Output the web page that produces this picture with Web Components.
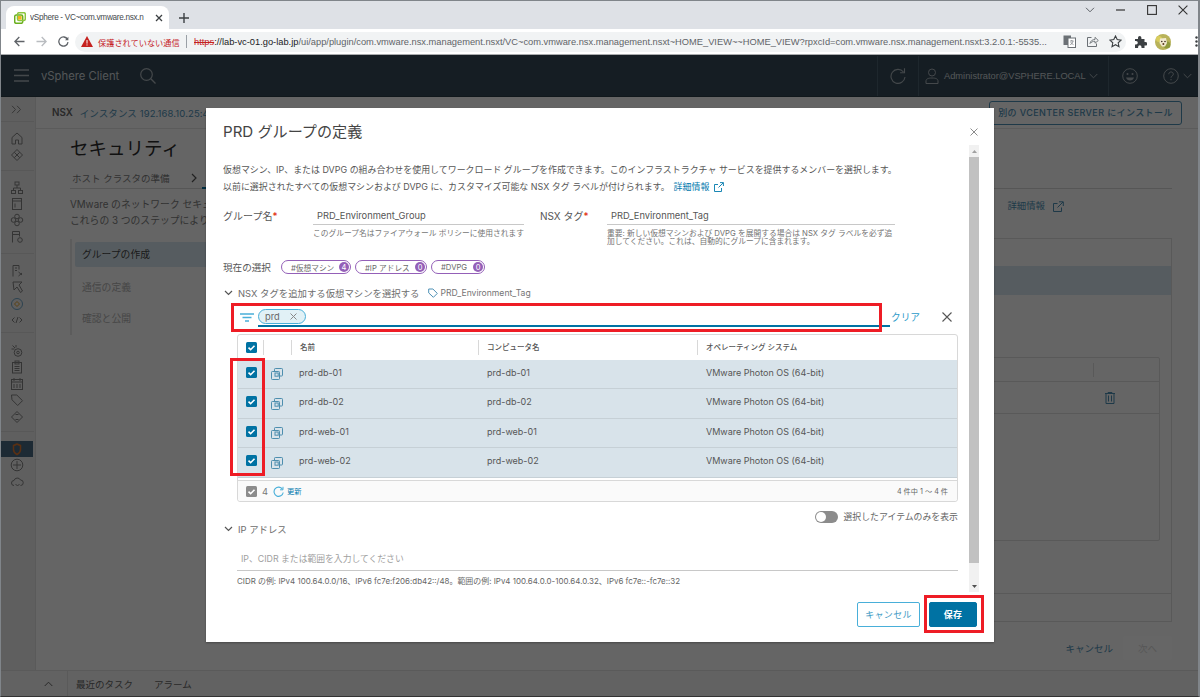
<!DOCTYPE html>
<html lang="ja">
<head>
<meta charset="utf-8">
<title>vSphere</title>
<style>
html,body{margin:0;padding:0;width:1200px;height:697px;overflow:hidden;background:#fff}
body{font-family:Inter,"Noto Sans CJK JP",sans-serif;position:relative}
</style>
</head>
<body>
<app-shell>
  <browser-chrome></browser-chrome>
  <vsphere-app></vsphere-app>
</app-shell>
<modal-backdrop>
  <group-modal></group-modal>
</modal-backdrop>
<red-box style="--x:231px;--y:303px;--w:651px;--h:29px"></red-box>
<red-box style="--x:230px;--y:358px;--w:35px;--h:118px"></red-box>
<red-box style="--x:924px;--y:595px;--w:60px;--h:38px"></red-box>
<window-frame></window-frame>
<script>
const def=(name,css,html)=>customElements.define(name,class extends HTMLElement{
  connectedCallback(){
    if(this.shadowRoot)return;
    this.attachShadow({mode:'open'}).innerHTML='<style>'+css+'</style>'+(typeof html==='function'?html(this):html);
  }
});
const svg=(w,h,vb,body,extra='')=>`<svg width="${w}" height="${h}" viewBox="${vb}" fill="none" ${extra}>${body}</svg>`;

def('app-shell',':host{display:flex;flex-direction:column;width:1200px;height:697px}','<slot></slot>');
def('window-frame',':host{position:absolute;inset:0;border:1px solid #80858a;border-right-width:2px;border-bottom-color:#333;pointer-events:none}','');
def('red-box',':host{position:absolute;left:var(--x);top:var(--y);width:var(--w);height:var(--h);border:3px solid #ee1c25;box-sizing:border-box;pointer-events:none}','');

/* ---------- browser chrome ---------- */
def('browser-chrome',`
:host{display:block;flex:none;height:55px;background:#fff;font-family:"Liberation Sans","Noto Sans CJK JP",sans-serif}
.strip{height:29px;background:#dee1e6;display:flex;align-items:flex-end;box-sizing:border-box;padding-left:6px;color:#3c4043}
.tab{width:163px;height:23px;background:#fff;border-radius:8px 8px 0 0;display:flex;align-items:center;box-sizing:border-box;padding:0 6px 0 8px;font-size:8.200px}
.tab svg{flex:none}
.tab .t{width:118px;margin-left:4px;overflow:hidden;white-space:nowrap;color:#45494d;letter-spacing:-.3px}
.tab .x{margin-left:7px;flex:none}
.plus{margin:0 0 6px 10px;flex:none}
.win{margin-left:auto;display:flex;align-items:center;align-self:flex-start;margin-top:5px;padding-right:12px}
.win svg{display:block}
.tb{height:26px;box-sizing:border-box;display:flex;align-items:center;border-bottom:1px solid #a9abad;padding-left:8px}
.nav{display:flex;width:67px;align-items:center}
.nav span{width:22px;display:flex;justify-content:center}
.omni{width:1051px;height:20px;background:#f1f3f4;border-radius:10px;display:flex;align-items:center;font-size:9.300px;white-space:nowrap;box-sizing:border-box;padding-left:6px;flex:none}
.warn{color:#c5221f;margin-left:5px;font-size:8.200px;width:82px;flex:none}
.sep{width:1px;height:13px;background:#9aa0a6;margin:0 7px 0 6px;flex:none}
.url{color:#5f6368;width:860px;overflow:hidden;flex:none}
.url s{color:#c5221f}
.url b{font-weight:400;color:#202124}
.oi{display:flex;gap:10px;margin-left:9px;align-items:center}
.ext{display:flex;align-items:center;margin-left:8px;gap:8px}
`,()=>`
<div class="strip">
  <div class="tab">
    ${svg(12,12,'0 0 12 12','<rect x="0.7" y="3" width="8" height="8.3" rx="1.5" stroke="#6aaf1f" stroke-width="1.5"/><rect x="3.5" y="0.7" width="7.8" height="7.8" rx="1.5" stroke="#8cc63f" stroke-width="1.5"/><rect x="4" y="4" width="3.6" height="3.6" fill="#f2b21c"/>')}
    <span class="t">vSphere - VC~com.vmware.nsx.n</span>
    ${svg(8,8,'0 0 8 8','<path d="M1 1l6 6M7 1L1 7" stroke="#3c4043" stroke-width="1.3"/>','class="x"')}
  </div>
  ${svg(10,10,'0 0 10 10','<path d="M5 0v10M0 5h10" stroke="#3c4043" stroke-width="1.4"/>','class="plus"')}
  <div class="win">
    ${svg(10,6,'0 0 10 6','<path d="M1 .8l4 4 4-4" stroke="#5f6368"/>')}
    <span style="width:21px"></span>
    ${svg(9,2,'0 0 9 2','<path d="M0 1h9" stroke="#333" stroke-width="1.2"/>')}
    <span style="width:22px"></span>
    ${svg(10,10,'0 0 10 10','<rect x=".6" y=".6" width="8.8" height="8.8" stroke="#333" stroke-width="1.1"/>')}
    <span style="width:21px"></span>
    ${svg(10,10,'0 0 10 10','<path d="M.6.6l8.8 8.8M9.4.6L.6 9.4" stroke="#333" stroke-width="1.1"/>')}
  </div>
</div>
<div class="tb">
  <div class="nav">
    <span>${svg(11,11,'0 0 11 11','<path d="M10.5 5.5H1M5.3 1L.9 5.5l4.4 4.5" stroke="#5f6368" stroke-width="1.3"/>')}</span>
    <span>${svg(11,11,'0 0 11 11','<path d="M.5 5.5H10M5.7 1l4.4 4.5L5.7 10" stroke="#b9bcc0" stroke-width="1.3"/>')}</span>
    <span>${svg(11,11,'0 0 11 11','<path d="M9.500 3.400A4.600 4.600 0 1 0 10 6.200" stroke="#5f6368" stroke-width="1.3"/><path d="M10.400.8v3.400H7z" fill="#5f6368"/>')}</span>
  </div>
  <div class="omni">
    ${svg(12,11,'0 0 12 11','<path d="M6 0l6 11H0z" fill="#c5221f"/><path d="M6 4v3.600M6 8.400v1.100" stroke="#fff"/>')}
    <span class="warn">保護されていない通信</span><span class="sep"></span>
    <span class="url"><s>https</s><b>://lab-vc-01.go-lab.jp</b>/ui/app/plugin/com.vmware.nsx.management.nsxt/VC~com.vmware.nsx.management.nsxt~HOME_VIEW~~HOME_VIEW?rpxcId=com.vmware.nsx.management.nsxt:3.2.0.1:-5535...</span>
    <span class="oi">
      ${svg(13,13,'0 0 13 13','<rect x=".5" y=".5" width="7.5" height="9.5" fill="#6b7075"/><rect x="5" y="3" width="7.5" height="9.5" fill="#fff" stroke="#6b7075"/><path d="M7 6h3.600M8.800 5v1M10 6.200c-.4 2-1.400 2.800-2.800 3.400M7.800 7c.4 1 1.300 2 2.700 2.600" stroke="#6b7075" stroke-width=".7"/>')}
      ${svg(13,13,'0 0 13 13','<path d="M5.500 2.500H1.500v9h9V8.500" stroke="#6b7075"/><path d="M4 8.500c.4-2.600 2.500-4 5-4V2.300l3.300 3.200L9 8.200V6.300c-2 0-3.800.6-5 2.200z" stroke="#6b7075" stroke-width=".9"/>')}
      ${svg(13,13,'0 0 13 13','<path d="M6.500 1l1.700 3.600 3.900.5-2.900 2.700.8 3.900-3.500-2-3.500 2 .8-3.900L.9 5.100l3.900-.5z" stroke="#3c4043" stroke-width="1.100"/>')}
    </span>
  </div>
  <div class="ext">
    ${svg(13,13,'0 0 13 13','<path d="M1 4h3V2.700a1.700 1.700 0 0 1 3.400 0V4h3.100v3h1a1.800 1.800 0 0 1 0 3.600h-1V13H7.500v-1a1.700 1.700 0 0 0-3.400 0v1H1V9.500h1a1.800 1.800 0 0 0 0-3.600H1z" fill="#3c4043"/>')}
    ${svg(16,16,'0 0 16 16','<circle cx="8" cy="8" r="8" fill="#b9b35a"/><circle cx="4" cy="5" r="3" fill="#d9cd5d"/><circle cx="12" cy="11" r="3.500" fill="#8f9a3c"/><path d="M5 4.500l6-.5 1 5-2 3.500H7L4.500 9z" fill="#f2ead0"/><circle cx="6.800" cy="7.500" r=".8" fill="#3b2a1a"/><circle cx="10" cy="7.500" r=".8" fill="#3b2a1a"/><circle cx="8.400" cy="10" r="1" fill="#5b3a20"/>')}
    <span style="width:8px"></span>
    ${svg(3,11,'0 0 3 11','<circle cx="1.500" cy="1.500" r="1.200" fill="#3c4043"/><circle cx="1.500" cy="5.500" r="1.200" fill="#3c4043"/><circle cx="1.500" cy="9.500" r="1.200" fill="#3c4043"/>')}
  </div>
</div>`);

/* ---------- vSphere app (dimmed by the backdrop) ---------- */
def('vsphere-app',':host{display:flex;flex-direction:column;flex:1;min-height:0;background:#fcfcfc}','<vs-header></vs-header><vs-work></vs-work><vs-tasks></vs-tasks>');

def('vs-header',`
:host{display:flex;align-items:center;height:42px;flex:none;background:#364a58;color:#cfd6db;box-sizing:border-box;font-size:11.5px;border-bottom:1px solid #2c3c48}
.brand{font-size:11.300px;margin-left:12px;width:99px;white-space:nowrap}
.burger{margin-left:14px}
.sp{flex:1}
.d{width:1px;height:40px;background:#4d6372;flex:none}
.ref{width:40px;display:flex;justify-content:center}
.user{display:flex;align-items:center;width:189px;box-sizing:border-box;padding-left:6px;white-space:nowrap;font-size:9.300px;font-family:"Liberation Sans",sans-serif}
.user span{margin:0 5px 0 5px;width:140px}
.r{display:flex;align-items:center;width:91px;box-sizing:border-box;padding-left:13px}
`,()=>`
${svg(15,13,'0 0 15 13','<path d="M0 1h15M0 6.500h15M0 12h15" stroke="#aab4bb" stroke-width="1.300"/>','class="burger"')}
<span class="brand">vSphere Client</span>
${svg(16,16,'0 0 16 16','<circle cx="6.500" cy="6.500" r="5.800" stroke="#aab4bb" stroke-width="1.200"/><path d="M10.800 10.800l4.700 4.700" stroke="#aab4bb" stroke-width="1.300"/>')}
<span class="sp"></span>
<span class="d"></span>
<span class="ref">${svg(16,17,'0 0 16 17','<path d="M13.500 5a7 7 0 1 0 1.500 5" stroke="#aab4bb" stroke-width="1.100"/><path d="M14.500 1.300v4.400h-4.400" stroke="#aab4bb" stroke-width="1.100"/>')}</span>
<span class="d"></span>
<span class="user">
  ${svg(14,16,'0 0 14 16','<circle cx="7" cy="4.500" r="3.500" stroke="#aab4bb"/><path d="M1 15.500v-2.500c0-2 2-3 6-3s6 1 6 3v2.500z" stroke="#aab4bb"/>')}
  <span>Administrator@VSPHERE.LOCAL</span>
  ${svg(9,6,'0 0 9 6','<path d="M.7 1l3.800 3.800L8.300 1" stroke="#aab4bb"/>')}
</span>
<span class="d"></span>
<span class="r">
  ${svg(16,16,'0 0 16 16','<circle cx="8" cy="8" r="7.300" stroke="#aab4bb"/><circle cx="5.500" cy="6" r="1" fill="#aab4bb"/><circle cx="10.500" cy="6" r="1" fill="#aab4bb"/><path d="M4 9.500h8c-.5 2-2 3-4 3s-3.500-1-4-3z" fill="#aab4bb"/>')}
  <span style="width:25px"></span>
  ${svg(16,16,'0 0 16 16','<circle cx="8" cy="8" r="7.300" stroke="#aab4bb"/><path d="M5.800 6.200c0-3 4.500-3 4.500 0 0 1.800-2.300 1.600-2.300 3.500M8 11v1.300" stroke="#aab4bb"/>')}
  <span style="width:4px"></span>
  ${svg(9,6,'0 0 9 6','<path d="M.7 1l3.800 3.800L8.300 1" stroke="#aab4bb"/>')}
</span>`);

def('vs-work',':host{display:flex;flex:1;min-height:0}','<vs-sidenav></vs-sidenav><vs-main></vs-main>');

const I={
 home:'<path d="M2 13V6.500L7 2l5 4.500V13H8.500V9h-3v4z"/>',
 diamond:'<path d="M7 1.500L12.500 7 7 12.500 1.500 7z"/><path d="M4.300 4.300l5.400 5.400M9.700 4.300l-5.400 5.400"/>',
 net:'<rect x="5" y="1" width="4" height="3"/><rect x="1.500" y="9.500" width="4" height="3"/><rect x="8.500" y="9.500" width="4" height="3"/><path d="M7 4v3M3.500 9.500V7h7v2.500"/>',
 store:'<rect x="2.500" y="1.500" width="9" height="11"/><path d="M2.500 4h9M5 6.500v4"/>',
 flower:'<circle cx="7" cy="3.500" r="2.300"/><circle cx="7" cy="10.500" r="2.300"/><circle cx="3.500" cy="7" r="2.300"/><circle cx="10.500" cy="7" r="2.300"/>',
 doc:'<path d="M2.500 12.500v-11h7v5"/><path d="M2.500 4.500h7"/><circle cx="10" cy="10" r="2.300"/>',
 doc2:'<path d="M3 12.500v-11h6v4"/><path d="M5 4h2M5 6.500h2"/><path d="M8.500 8l3.500 3M8.500 12l3.500-3"/>',
 arrow:'<path d="M3 2h9l-3 3 3.500 6-2 1.500L7 7l-3 3z"/>',
 cloud:'<circle cx="7" cy="7" r="5.500" stroke="#6fa6c7"/><path d="M7 4.500L9.500 7 7 9.500 4.500 7z" stroke="#e5a12c"/>',
 code:'<path d="M4.500 4.500L2 7l2.500 2.500M9.500 4.500L12 7 9.500 9.500M8 4L6 10"/>',
 gears:'<circle cx="8" cy="8.500" r="3.800"/><circle cx="8" cy="8.500" r="1.300"/><path d="M2.500 1.500L5 4M1.500 5h3M6 1v2.500"/>',
 clip:'<rect x="2.500" y="2.500" width="9" height="10.500"/><rect x="5" y="1" width="4" height="3"/><path d="M4.500 6.500h5M4.500 8.500h5M4.500 10.500h5"/>',
 cal:'<rect x="1.500" y="2.500" width="11" height="10"/><path d="M1.500 5h11M4 1v3M10 1v3M4 7v4M7 7v4M10 7v4"/>',
 tag:'<path d="M1.500 2h5.300l5.700 5.700-4.800 4.800L2 6.800z"/>',
 sync:'<path d="M7 1.500L12.500 7 7 12.500 1.500 7z"/><path d="M5.500 4.500h3M5.500 9.500h3"/>',
 shield:'<path d="M3.500 3.500C5 3 6 2.500 7 2c1 .5 2 1 3.500 1.500v4C10.500 10 9 11.500 7 12.500 5 11.500 3.500 10 3.500 7.500z" stroke="#e0762e" stroke-width="1.500"/>',
 plus:'<circle cx="7" cy="7" r="5.800"/><path d="M7 3v8M3 7h8"/>',
 cloud2:'<path d="M4 10.500a2.500 2.500 0 0 1 0-5 3.500 3.500 0 0 1 6.500-.5 2.500 2.500 0 0 1 0 5.500"/><path d="M5.500 9l2 2 2-2"/>'
};
const ic=(n)=>`<span class="i">${svg(14,14,'0 0 14 14',I[n],'stroke="#828282" stroke-width="1"')}</span>`;
def('vs-sidenav',`
:host{display:flex;flex-direction:column;width:35px;flex:none;background:#eeeeee;border-right:1px solid #e0e0e0;box-sizing:content-box;color:#888}
.top{height:25px;display:flex;align-items:center;justify-content:center;font-size:13px;color:#777;border-bottom:1px solid #dcdcdc;padding-right:1px;box-sizing:border-box;width:34px}
.g{border-bottom:1px solid #dcdcdc;display:flex;flex-direction:column;width:34px;box-sizing:border-box}
.g.last{border:0}
.i{height:16.400px;display:flex;align-items:center;justify-content:center}
.i svg{display:block}
.a{background:#4a6a82;height:16px;width:33px}
`,()=>`
<div class="top">${svg(11,9,'0 0 11 9','<path d="M1 .8L4.500 4.500 1 8.200M6 .8l3.500 3.700L6 8.200" stroke="#8a8a8a"/>')}</div>
<div class="g" style="padding:8px 0 7px">${ic('home')}${ic('diamond')}</div>
<div class="g" style="padding:8.700px 0 7.700px">${ic('net')}${ic('store')}${ic('flower')}${ic('doc')}</div>
<div class="g" style="padding:9px 0 4px">${ic('doc2')}${ic('arrow')}${ic('cloud')}${ic('code')}</div>
<div class="g" style="padding:9.500px 0 6.500px">${ic('gears')}${ic('clip')}${ic('cal')}${ic('tag')}${ic('sync')}</div>
<div class="g last" style="padding-top:9px"><span class="i a">${svg(14,14,'0 0 14 14',I.shield)}</span>${ic('plus')}${ic('cloud2')}</div>`);

def('vs-main',`
:host{display:flex;flex-direction:column;flex:1;min-width:0;color:#6a6a6a;font-size:10.200px}
.crumb{height:32px;flex:none;display:flex;align-items:center;border-bottom:1px solid #e4e4e4;padding:0 18px 0 16px;box-sizing:border-box;white-space:nowrap}
.crumb b{font-weight:600;margin-right:7px;color:#666;font-size:9.800px}
.crumb a{color:#4d90b5;font-size:9.500px;letter-spacing:.1px}
.inst{margin-left:auto;height:24px;width:193px;box-sizing:border-box;border:1px solid #4d90b5;border-radius:3px;color:#4d90b5;display:flex;align-items:center;justify-content:center;font-size:9px;font-weight:500;letter-spacing:.4px;white-space:nowrap}
.body{flex:1;min-height:0;display:flex;flex-direction:column;padding:8px 28px 0 34px}
h1{margin:0;font-weight:400;font-size:18.500px;line-height:22px;color:#2c2c2c;flex:none}
.tabs{margin-top:9px;height:21px;flex:none;border-bottom:1px solid #d6d6d6;display:flex;align-items:center;padding-left:2px;box-sizing:border-box;color:#7c7c7c;font-size:9.500px}
.tabs svg{margin-left:22px}
.tabs i{align-self:flex-end;width:60px;height:2px;margin:0 0 -1px 5px;background:#0072a3}
.desc{margin-top:8px;flex:none;line-height:16px;display:flex;justify-content:space-between;white-space:nowrap;color:#7c7c7c;font-size:9.800px}
.desc a{color:#4d90b5;display:inline-flex;align-items:center;gap:8px;font-size:9.400px;align-self:flex-start;margin:1px 108px 0 0;height:16px}
.desc a em{font-style:normal;color:#7c7c7c}
.panel{display:flex;margin-top:9px;height:384px;flex:none}
.step{width:160px;flex:none;height:96px;border-left:2px solid #e6e6e6;margin-top:1px;box-sizing:border-box;padding:3px 0 0 3px;font-size:9.800px}
.step div{height:31px;line-height:31px;padding-left:7px;color:#b0b0b0}
.step div.on{height:25px;line-height:25px;background:#d8e6ef;color:#444;margin-bottom:5px;border-radius:2px 0 0 2px}
.box{flex:1;border:1px solid #dfdfdf;display:flex;flex-direction:column;box-sizing:border-box}
.bh{height:27px;flex:none}
.band{height:29px;background:#d8e6ef;flex:none}
.inner{margin:62px 11px 0 20px;height:184px;border:1px solid #dfdfdf;border-radius:2px;box-sizing:border-box;flex:none}
.ih{height:24px;border-bottom:1px solid #dfdfdf;display:flex;justify-content:flex-end;padding-right:65px;align-items:center;box-sizing:border-box}
.ih i{width:1px;height:14px;background:#dfdfdf}
.ir{height:32px;border-bottom:1px solid #dfdfdf;display:flex;justify-content:flex-end;align-items:center;padding-right:44px;box-sizing:border-box}
.foot{margin-top:52px;border-top:1px solid #dfdfdf;flex:1}
.acts{display:flex;justify-content:flex-end;align-items:center;margin-top:14px;height:24px;flex:none;gap:10px}
.acts a{color:#4d90b5;font-size:9.500px}
.next{width:49px;height:24px;background:#fff;color:#d8d8d8;border-radius:3px;display:flex;align-items:center;justify-content:center;font-size:9.500px}
`,()=>`
<div class="crumb"><b>NSX</b><a>インスタンス 192.168.10.25:443</a><span class="inst">別の VCENTER SERVER にインストール</span></div>
<div class="body">
  <h1>セキュリティ</h1>
  <div class="tabs">ホスト クラスタの準備${svg(6,10,'0 0 6 10','<path d="M1 1l4 4-4 4" stroke="#555" stroke-width="1.200"/>')}<i></i></div>
  <div class="desc"><div>VMware のネットワーク セキュリティ<br>これらの 3 つのステップにより</div>
    <a><em>。</em><span>詳細情報</span>${svg(11,11,'0 0 11 11','<path d="M8.500 6.500v4h-8v-8h4M6 .8h4.300V5M10 1L4.500 6.500" stroke="#4d90b5"/>')}</a></div>
  <div class="panel">
    <div class="step"><div class="on">グループの作成</div><div>通信の定義</div><div>確認と公開</div></div>
    <div class="box">
      <div class="bh"></div><div class="band"></div>
      <div class="inner"><div class="ih"><i></i></div><div class="ir">${svg(10,12,'0 0 10 12','<path d="M0 1.500h10M3 1.500V.5h4v1M1 1.500v10h8v-10M3.500 3.500v6M6.500 3.500v6" stroke="#4d90b5"/>')}</div></div>
      <div class="foot"></div>
    </div>
  </div>
  <div class="acts"><a>キャンセル</a><span class="next">次へ</span></div>
</div>`);

def('vs-tasks',`
:host{display:flex;align-items:center;height:27px;flex:none;background:#f4f4f4;border-top:1px solid #e2e2e2;box-sizing:border-box;font-size:9.500px;color:#666}
svg{margin-left:44px}
.s{width:1px;height:26px;background:#e2e2e2;margin:0 8px 0 14px}
.b{margin-left:21px}
`,()=>`${svg(9,6,'0 0 9 6','<path d="M.7 5l3.800-3.800L8.300 5" stroke="#666"/>')}<span class="s"></span><span>最近のタスク</span><span class="b">アラーム</span>`);

/* ---------- modal ---------- */
def('modal-backdrop',':host{position:absolute;left:0;top:55px;right:0;bottom:0;background:rgba(0,0,0,.6)}','<slot></slot>');

def('group-modal',`
:host{position:absolute;left:206px;top:53px;width:788px;height:534px;background:#fff;display:flex;flex-direction:column;box-sizing:border-box;padding-left:17px;color:#565656;font-size:8.950px;box-shadow:0 1px 2px rgba(0,0,0,.3)}
.hd{height:37px;flex:none;display:flex;align-items:flex-start;justify-content:space-between;padding:14px 16px 0 0;box-sizing:border-box}
h2{margin:0;font-weight:400;font-size:15.100px;line-height:20px;color:#444;white-space:nowrap}
.close{margin-top:6px}
.mid{flex:1;display:flex;min-height:0;padding-right:15px}
.ct{flex:1;min-width:0;overflow:hidden;padding:16px 11px 0 0;box-sizing:border-box}
.ft{height:50px;flex:none;display:flex;justify-content:flex-end;gap:9px;padding:10px 17px 0 0;box-sizing:border-box}
.btn{height:25px;box-sizing:border-box;border:1px solid #49afd9;border-radius:2px;display:flex;align-items:center;justify-content:center;font-size:9px;width:63px;color:#3d9ac4;letter-spacing:.3px}
.btn.p{width:48px;background:#0072a3;border-color:#0072a3;color:#fff;font-weight:600}
.intro{line-height:17px;white-space:nowrap;color:#565656}
.intro a{color:#0079ad;display:inline-flex;gap:5px;align-items:center;margin-left:4px}
.form{display:grid;grid-template-columns:90px 211px 16px 67px 288px;margin-top:11px;height:38px}
.lbl{font-size:10px;line-height:20px;color:#565656;white-space:nowrap}
.lbl i{color:#e02200;font-style:normal}
.inp{height:19px;box-sizing:border-box;border-bottom:1px solid #c8c8c8;padding-left:4px;font-size:9.300px;line-height:19px;color:#565656;white-space:nowrap}
.help{margin-top:4px;font-size:7.750px;line-height:8px;color:#747474;white-space:nowrap}
.sel{display:flex;align-items:center;margin-top:16px;height:14px}
.sel span.l{width:58px;font-size:9.600px;flex:none}
.sel tag-chip{margin-right:4px}
.sec{display:flex;align-items:center;margin-top:11px;height:16px;white-space:nowrap;font-size:9.400px;color:#6d6d6d}
.sec .ch{margin:0 5px 0 1px}
.sec .tg{margin:0 2px 0 9px}
.sec .tn{font-size:8.600px;color:#747474}
.flt{display:flex;align-items:center;margin-top:6px;height:20px;padding-left:17px}
.flt .fi{height:20px;box-sizing:border-box;margin-left:4px;border-bottom:2px solid #0072a3;display:flex;align-items:flex-start;flex:none;width:632px}
.fc{display:inline-flex;align-items:center;height:15px;width:48px;box-sizing:border-box;border:1px solid #49afd9;background:#e1f1f6;border-radius:8px;margin-top:2px;padding:0 8px 0 6px;color:#666;font-size:9.300px;justify-content:space-between}
.clr{margin-left:1px;color:#2b9ac9;font-size:9.700px;width:28px;white-space:nowrap}
.fx{margin-left:23px}
vm-grid{margin:7px 0 0 14px}
.tog{display:flex;justify-content:flex-end;align-items:center;margin-top:9px;height:11px;white-space:nowrap;color:#666;font-size:8.900px}
.tog .t{width:23px;height:12px;background:#8c8c8c;border-radius:6px;margin-right:6px;position:relative;flex:none}
.tog .t::after{content:"";position:absolute;left:1px;top:1px;width:10px;height:10px;border-radius:50%;background:#fff}
.ip{display:flex;align-items:center;height:14px;font-size:9.400px;color:#6d6d6d}
.ip svg{margin:0 5px 0 1px}
.pl{margin:11px 0 0 14px;height:24px;box-sizing:border-box;border-bottom:1px solid #c8c8c8;line-height:23px;padding-left:4px;color:#a0a0a0;font-size:8.800px}
.cidr{margin:5px 0 0 14px;font-size:7.950px;line-height:10px;color:#666;white-space:nowrap}
.sb{width:10px;flex:none;background:#f1f1f1;display:flex;flex-direction:column}
.sb .u,.sb .d{height:12px;display:flex;align-items:center;justify-content:center;flex:none}
.sb .th{height:406px;background:#c1c1c1;flex:none}
.sb .sp{flex:1}
`,()=>{
const ch=svg(9,6,'0 0 9 6','<path d="M1 1l3.500 3.500L8 1" stroke="#565656" stroke-width="1.200"/>','class="ch"');
return `
<div class="hd"><h2>PRD グループの定義</h2>${svg(8,8,'0 0 8 8','<path d="M.5.500l7 7M7.500.500l-7 7" stroke="#8c8c8c"/>','class="close"')}</div>
<div class="mid">
<div class="ct">
  <div class="intro">仮想マシン、IP、または DVPG の組み合わせを使用してワークロード グループを作成できます。このインフラストラクチャ サービスを提供するメンバーを選択します。<br>以前に選択されたすべての仮想マシンおよび DVPG に、カスタマイズ可能な NSX タグ ラベルが付けられます。<a>詳細情報 ${svg(10,10,'0 0 10 10','<path d="M7.500 6v3.500h-7v-7H4M6 .600h3.400V4M9.200.800L4.500 5.500" stroke="#0079ad" stroke-width=".9"/>')}</a></div>
  <div class="form">
    <div class="lbl">グループ名<i>*</i></div>
    <div><div class="inp">PRD_Environment_Group</div><div class="help">このグループ名はファイアウォール ポリシーに使用されます</div></div>
    <div></div>
    <div class="lbl">NSX タグ<i>*</i></div>
    <div><div class="inp">PRD_Environment_Tag</div><div class="help">重要: 新しい仮想マシンおよび DVPG を展開する場合は NSX タグ ラベルを必ず追<br>加してください。これは、自動的にグループに含まれます。</div></div>
  </div>
  <div class="sel"><span class="l">現在の選択</span>
    <tag-chip label="#仮想マシン" count="4" w="70"></tag-chip><tag-chip label="#IP アドレス" count="0" w="72"></tag-chip><tag-chip label="#DVPG" count="0" w="54"></tag-chip></div>
  <div class="sec">${ch}NSX タグを追加する仮想マシンを選択する
    ${svg(10,10,'0 0 10 10','<path d="M.7 1h4.200L9.300 5.400 5.400 9.300 .7 4.900z" stroke="#4d90b5"/>','class="tg"')}<span class="tn">PRD_Environment_Tag</span></div>
  <div class="flt">
    ${svg(14,9,'0 0 14 9','<path d="M0 1h14M2.500 4.500h9M5 8h4" stroke="#49afd9" stroke-width="1.300"/>')}
    <div class="fi"><span class="fc">prd ${svg(7,7,'0 0 7 7','<path d="M.5.500l6 6M6.500.500l-6 6" stroke="#888"/>')}</span></div>
    <span class="clr">クリア</span>
    ${svg(10,10,'0 0 10 10','<path d="M.5.500l9 9M9.500.500l-9 9" stroke="#565656" stroke-width="1.100"/>','class="fx"')}
  </div>
  <vm-grid>
    <vm-row name="prd-db-01" comp="prd-db-01" os="VMware Photon OS (64-bit)"></vm-row>
    <vm-row name="prd-db-02" comp="prd-db-02" os="VMware Photon OS (64-bit)"></vm-row>
    <vm-row name="prd-web-01" comp="prd-web-01" os="VMware Photon OS (64-bit)"></vm-row>
    <vm-row name="prd-web-02" comp="prd-web-02" os="VMware Photon OS (64-bit)"></vm-row>
  </vm-grid>
  <div class="tog"><span class="t"></span>選択したアイテムのみを表示</div>
  <div class="ip">${ch}IP アドレス</div>
  <div class="pl">IP、CIDR または範囲を入力してください</div>
  <div class="cidr">CIDR の例: IPv4 100.64.0.0/16、IPv6 fc7e:f206:db42::/48。範囲の例: IPv4 100.64.0.0-100.64.0.32、IPv6 fc7e::-fc7e::32</div>
</div>
<div class="sb"><span class="u">${svg(5,3,'0 0 5 3','<path d="M2.500 0L5 3H0z" fill="#a0a0a0"/>')}</span><span class="th"></span><span class="sp"></span><span class="d">${svg(5,3,'0 0 5 3','<path d="M0 0h5L2.500 3z" fill="#505050"/>')}</span></div>
</div>
<div class="ft"><span class="btn">キャンセル</span><span class="btn p">保存</span></div>`});

def('tag-chip',`
:host{display:inline-flex;align-items:center;justify-content:space-between;height:14px;box-sizing:border-box;border:1px solid #9460b8;border-radius:7px;padding:0 1px 0 9px;font-size:7.700px;color:#6a6a6a;white-space:nowrap}
b{width:10px;height:10px;border-radius:50%;background:#9460b8;color:#fff;font-weight:400;font-size:7.500px;display:flex;align-items:center;justify-content:center;flex:none}
`,h=>`<style>:host{width:${h.getAttribute('w')}px}</style><span>${h.getAttribute('label')}</span><b>${h.getAttribute('count')}</b>`);

const chk=(c='#0072a3')=>svg(11,11,'0 0 11 11',`<rect width="11" height="11" rx="1.500" fill="${c}"/><path d="M2.500 5.700l2.100 2 3.900-4" stroke="#fff" stroke-width="1.600"/>`);

def('vm-grid',`
:host{display:flex;flex-direction:column;width:721px;height:168px;box-sizing:border-box;border:1px solid #d8d8d8;border-radius:3px;background:#fff}
.h{display:grid;grid-template-columns:25px 28px 187px 219px 1fr;height:24.500px;flex:none;align-items:center;font-size:7.500px;font-weight:500;color:#565656}
.h span{height:15px;line-height:15px;border-left:1px solid #d8d8d8;padding-left:8px;white-space:nowrap;box-sizing:border-box}
.h span:first-child{border:0;padding:0 0 0 2px;display:flex;justify-content:center;align-items:center}
.f{margin-top:2.500px;border-top:1px solid #d8d8d8;flex:1;background:#fafafa;display:flex;align-items:center;padding:0 9px 0 8px;font-size:8.700px;color:#666;border-radius:0 0 3px 3px}
.f .n{margin:0 5px 0 5px;font-size:9.300px;color:#777}
.f a{color:#0079ad;margin-left:3px;font-size:7.300px}
.f .r{margin-left:auto;font-size:7.200px;color:#666}
`,()=>`
<div class="h"><span>${chk()}</span><span></span><span>名前</span><span>コンピュータ名</span><span>オペレーティング システム</span></div>
<slot></slot>
<div class="f">${chk('#8c8c8c')}<span class="n">4</span>${svg(11,11,'0 0 11 11','<path d="M9.500 3.200A4.600 4.600 0 1 0 10.200 6.500" stroke="#49afd9" stroke-width="1.100"/><path d="M10 .8v3H7" stroke="#49afd9"/>')}<a>更新</a><span class="r">4 件中 1 ～ 4 件</span></div>`);

def('vm-row',`
:host{display:grid;grid-template-columns:25px 28px 187px 219px 1fr;height:29.500px;box-sizing:border-box;align-items:center;background:#d8e3ea;border-bottom:1px solid #c6d0d6;font-size:9px;color:#565656;padding-bottom:3px}
span{padding-left:8px;white-space:nowrap}
span.n{padding-left:9px}
span.c{padding:0 0 0 2px;display:flex;justify-content:center}
span.v{padding:4px 0 0 8px;display:flex}
`,h=>`<span class="c">${chk()}</span><span class="v">${svg(12,12,'0 0 12 12','<rect x="3.500" y=".5" width="8" height="7.500" rx=".8" stroke="#4d8eae"/><rect x=".5" y="3.500" width="8" height="8" rx=".8" fill="#d8e3ea" stroke="#4d8eae"/><rect x="4" y="5" width="3.200" height="3.200" stroke="#4d8eae"/>')}</span><span>${h.getAttribute('name')}</span><span class="n">${h.getAttribute('comp')}</span><span class="n">${h.getAttribute('os')}</span>`);
</script>
</body>
</html>
